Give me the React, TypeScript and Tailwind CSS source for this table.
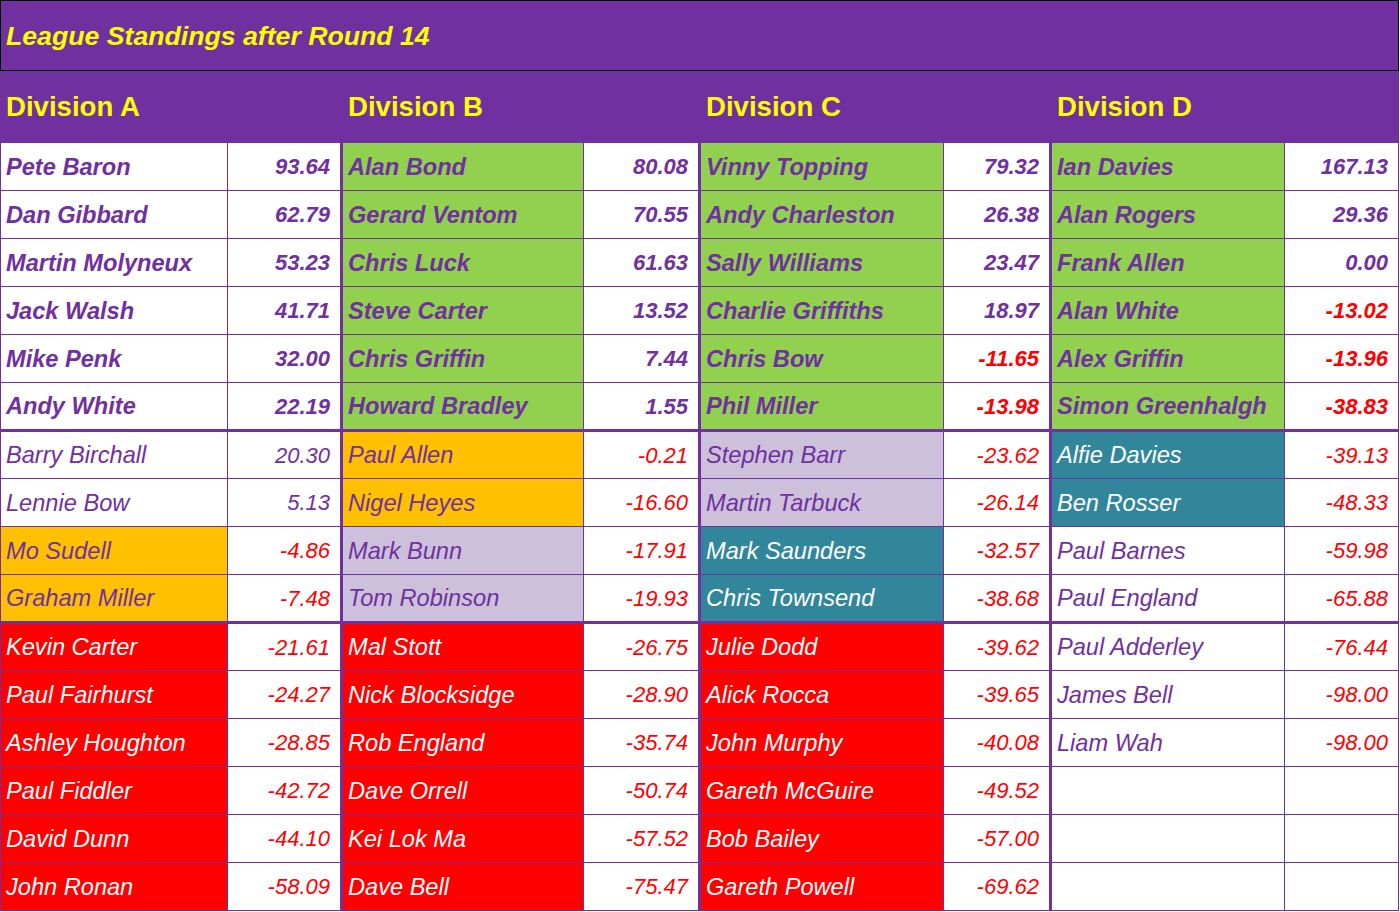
type Cell = [string, string, string];

// bg keys: w = white, g = green, o = orange, l = lavender, t = teal, r = red
const divisions: { title: string; rows: Cell[] }[] = [
  {
    title: "Division A",
    rows: [
      ["Pete Baron", "93.64", "w"],
      ["Dan Gibbard", "62.79", "w"],
      ["Martin Molyneux", "53.23", "w"],
      ["Jack Walsh", "41.71", "w"],
      ["Mike Penk", "32.00", "w"],
      ["Andy White", "22.19", "w"],
      ["Barry Birchall", "20.30", "w"],
      ["Lennie Bow", "5.13", "w"],
      ["Mo Sudell", "-4.86", "o"],
      ["Graham Miller", "-7.48", "o"],
      ["Kevin Carter", "-21.61", "r"],
      ["Paul Fairhurst", "-24.27", "r"],
      ["Ashley Houghton", "-28.85", "r"],
      ["Paul Fiddler", "-42.72", "r"],
      ["David Dunn", "-44.10", "r"],
      ["John Ronan", "-58.09", "r"],
    ],
  },
  {
    title: "Division B",
    rows: [
      ["Alan Bond", "80.08", "g"],
      ["Gerard Ventom", "70.55", "g"],
      ["Chris Luck", "61.63", "g"],
      ["Steve Carter", "13.52", "g"],
      ["Chris Griffin", "7.44", "g"],
      ["Howard Bradley", "1.55", "g"],
      ["Paul Allen", "-0.21", "o"],
      ["Nigel Heyes", "-16.60", "o"],
      ["Mark Bunn", "-17.91", "l"],
      ["Tom Robinson", "-19.93", "l"],
      ["Mal Stott", "-26.75", "r"],
      ["Nick Blocksidge", "-28.90", "r"],
      ["Rob England", "-35.74", "r"],
      ["Dave Orrell", "-50.74", "r"],
      ["Kei Lok Ma", "-57.52", "r"],
      ["Dave Bell", "-75.47", "r"],
    ],
  },
  {
    title: "Division C",
    rows: [
      ["Vinny Topping", "79.32", "g"],
      ["Andy Charleston", "26.38", "g"],
      ["Sally Williams", "23.47", "g"],
      ["Charlie Griffiths", "18.97", "g"],
      ["Chris Bow", "-11.65", "g"],
      ["Phil Miller", "-13.98", "g"],
      ["Stephen Barr", "-23.62", "l"],
      ["Martin Tarbuck", "-26.14", "l"],
      ["Mark Saunders", "-32.57", "t"],
      ["Chris Townsend", "-38.68", "t"],
      ["Julie Dodd", "-39.62", "r"],
      ["Alick Rocca", "-39.65", "r"],
      ["John Murphy", "-40.08", "r"],
      ["Gareth McGuire", "-49.52", "r"],
      ["Bob Bailey", "-57.00", "r"],
      ["Gareth Powell", "-69.62", "r"],
    ],
  },
  {
    title: "Division D",
    rows: [
      ["Ian Davies", "167.13", "g"],
      ["Alan Rogers", "29.36", "g"],
      ["Frank Allen", "0.00", "g"],
      ["Alan White", "-13.02", "g"],
      ["Alex Griffin", "-13.96", "g"],
      ["Simon Greenhalgh", "-38.83", "g"],
      ["Alfie Davies", "-39.13", "t"],
      ["Ben Rosser", "-48.33", "t"],
      ["Paul Barnes", "-59.98", "w"],
      ["Paul England", "-65.88", "w"],
      ["Paul Adderley", "-76.44", "w"],
      ["James Bell", "-98.00", "w"],
      ["Liam Wah", "-98.00", "w"],
      ["", "", "w"],
      ["", "", "w"],
      ["", "", "w"],
    ],
  },
];

const bgClass: Record<string, string> = {
  w: "bg-white text-[#7030a0]",
  g: "bg-[#92d050] text-[#7030a0]",
  o: "bg-[#ffc000] text-[#7030a0]",
  l: "bg-[#ccc0da] text-[#7030a0]",
  t: "bg-[#31869b] text-white",
  r: "bg-[#ff0000] text-white",
};

const nameW = ["w-[226px] mr-px", "w-[240px] mr-px", "w-[242px] mr-px", "w-[232px] mr-px"];
const scoreW = ["w-[112px] mr-[3px]", "w-[114px] mr-[3px]", "w-[105px] mr-[3px]", "w-[113px]"];
const headW = ["w-[342px]", "w-[358px]", "w-[351px]", "w-[347px]"];

const rowH = [47, 47, 47, 47, 47, 46, 46, 47, 47, 46, 46, 47, 47, 47, 47, 47];

export default function App() {
  return (
    <div className="w-[1400px] h-[912px] bg-white font-['Liberation_Sans',Arial,sans-serif]">
      <div className="w-[1399px] bg-[#7030a0]">
        <div className="h-[71px] border border-black flex items-center pl-[5px]">
          <span className="text-[26.67px] font-bold italic text-[#ffff00]">League Standings after Round 14</span>
        </div>
        <div className="h-[72px] flex items-center pl-px">
          {divisions.map((d, i) => (
            <div key={d.title} className={`${headW[i]} pl-[5px] text-[27.6px] font-bold text-[#ffff00]`}>
              {d.title}
            </div>
          ))}
        </div>
        <div className="pl-px pb-px">
          {rowH.map((h, r) => (
            <div
              key={r}
              className={`flex ${h === 47 ? "h-[47px]" : "h-[46px]"} ${r === 5 || r === 9 ? "mb-[3px]" : r === 15 ? "" : "mb-px"} ${r < 6 ? "font-bold" : "font-normal"} italic`}
            >
              {divisions.map((d, i) => {
                const [name, score, bg] = d.rows[r];
                const neg = score.startsWith("-");
                return (
                  <div key={i} className="flex">
                    <div className={`${nameW[i]} ${bgClass[bg]} flex items-center pl-[5px] pt-[2px] whitespace-nowrap text-[23.6px]`}>
                      {name}
                    </div>
                    <div
                      className={`${scoreW[i]} bg-white flex items-center justify-end pr-[10px] text-[22px] ${neg ? "text-[#ff0000]" : "text-[#7030a0]"}`}
                    >
                      {score}
                    </div>
                  </div>
                );
              })}
            </div>
          ))}
        </div>
      </div>
    </div>
  );
}
